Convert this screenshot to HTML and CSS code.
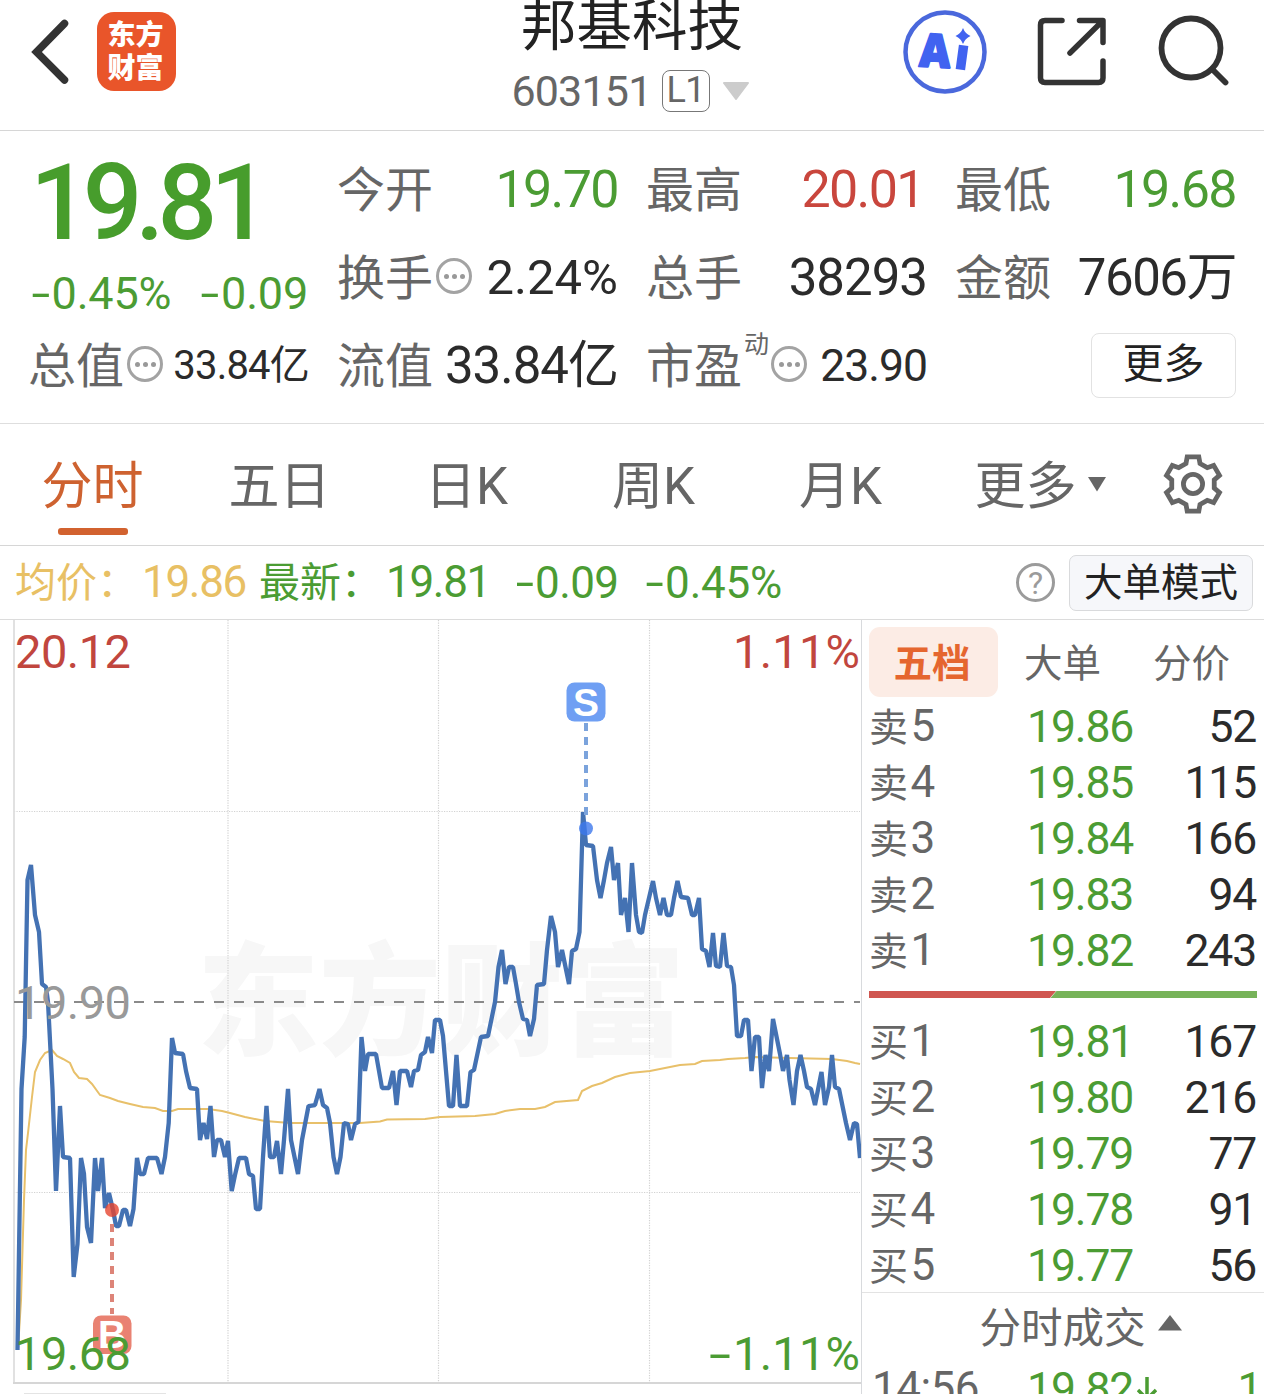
FILE: index.html
```html
<!DOCTYPE html>
<html lang="zh-CN">
<head>
<meta charset="utf-8">
<title>邦基科技 603151</title>
<link rel="stylesheet" href="styles.css">
</head>
<body>
<div class="app">
  <header class="top">
    <div class="top-left">
      <svg class="back" width="40" height="70" viewBox="0 0 40 70"><path d="M34.500 6.500L6.500 35L34.500 63" fill="none" stroke="#333" stroke-width="7.500" stroke-linecap="round" stroke-linejoin="miter"/></svg>
      <div class="logo"><span>东方</span><span>财富</span></div>
    </div>
    <div class="stock">
      <h1 class="stock-name">邦基科技</h1>
      <div class="stock-code"><span>603151</span><b class="level">L1</b>
        <svg width="26" height="18" viewBox="0 0 26 18"><path d="M1 1H25L13 17Z" fill="#ccc" stroke="#ccc" stroke-width="2" stroke-linejoin="round"/></svg>
      </div>
    </div>
    <div class="top-right">
      <svg width="84" height="84" viewBox="903.500 9.500 84 84"><circle cx="945.500" cy="51.500" r="39.500" fill="#fff" stroke="#4a68dc" stroke-width="4.500"/><g class="ai-text"><text x="920" y="66.500" textLength="31" lengthAdjust="spacingAndGlyphs" transform="rotate(3 935 50)">A</text></g><path d="M963.500 49.500L961.500 64.500" stroke="#4163f0" stroke-width="9.500" stroke-linecap="square" stroke-linejoin="round"/><path d="M963.500 27.500Q965.500 33 971 35.500Q965.500 38 963.500 43.500Q961.500 38 956 35.500Q961.500 33 963.500 27.500Z" fill="#4163f0"/></svg>
      <svg width="70" height="70" viewBox="1038 17 70 70" fill="none" stroke="#333" stroke-width="5.500" stroke-linecap="round" stroke-linejoin="round"><path d="M1063 20.500H1046Q1041.500 20.500 1041.500 25V78Q1041.500 82.500 1046 82.500H1099.500Q1104 82.500 1104 78V61M1080.500 20.500H1104V42.500M1071 53L1103 21.500"/></svg>
      <svg width="72" height="72" viewBox="1159 14 72 72" fill="none" stroke="#333" stroke-width="5.800" stroke-linecap="round"><circle cx="1192" cy="48" r="29.500"/><path d="M1213 69L1226.500 82.500"/></svg>
    </div>
  </header>

  <section class="quote">
    <div class="main-price down">
      <div class="price">19.81</div>
      <div class="change"><span><i class="neg">-</i>0.45%</span><span><i class="neg">-</i>0.09</span></div>
    </div>
    <div class="cell"><span class="label">今开</span><span class="v52 down">19.70</span></div>
    <div class="cell"><span class="label">最高</span><span class="v52 up gap-r">20.01</span></div>
    <div class="cell"><span class="label">最低</span><span class="v52 down">19.68</span></div>
    <div class="cell"><span class="label">换手<i class="dots"><u></u><u></u><u></u></i></span><span class="v49">2.24%</span></div>
    <div class="cell"><span class="label">总手</span><span class="v50">38293</span></div>
    <div class="cell"><span class="label">金额</span><span class="v50 yuan">7606万</span></div>
    <div class="cell"><span class="label">总值<i class="dots"><u></u><u></u><u></u></i></span><span class="v40">33.84亿</span></div>
    <div class="cell"><span class="label">流值</span><span class="v51">33.84亿</span></div>
    <div class="cell"><span class="label">市盈<sup class="dyn">动</sup><i class="dots"><u></u><u></u><u></u></i></span><span class="v44">23.90</span></div>
    <div class="cell end"><button class="more">更多</button></div>
  </section>

  <nav class="tabs">
    <a class="tab active">分时</a><a class="tab">五日</a><a class="tab">日K</a><a class="tab">周K</a><a class="tab">月K</a>
    <a class="tab wide">更多<svg width="20" height="16" viewBox="0 0 20 16"><path d="M1 1H19L10 15.500Z" fill="#666"/></svg></a>
    <a class="gear"><svg width="62" height="62" viewBox="-31 -31 62 62" fill="none" stroke="#666" stroke-width="4.800"><path d="M-5.800 -27.200H5.800L7 -20.500L14.250 -16.300L20.660 -18.600L26.460 -8.580L21.250 -4.190V4.190L26.460 8.580L20.660 18.600L14.250 16.300L7 20.500L5.800 27.200H-5.800L-7 20.500L-14.250 16.300L-20.660 18.600L-26.460 8.580L-21.250 4.190V-4.190L-26.460 -8.580L-20.660 -18.600L-14.250 -16.300L-7 -20.500Z"/><circle r="9.600"/></svg></a>
  </nav>

  <div class="info">
    <span class="avg"><span class="zh">均价：</span>19.86</span>
    <span class="last down"><span class="zh">最新：</span>19.81</span>
    <span class="last-chg down"><i class="neg">-</i>0.09</span>
    <span class="last-pct down"><i class="neg">-</i>0.45%</span>
    <span class="help">?</span>
    <button class="mode">大单模式</button>
  </div>

  <main class="body">
    <svg class="chart" width="861" height="774" viewBox="0 620 861 774">
      <text class="watermark" x="197" y="1045" textLength="488" lengthAdjust="spacingAndGlyphs">东方财富</text>
      <g stroke="#d2d2d2" stroke-width="1.200" stroke-dasharray="1.200 1.300"><path d="M228 620V1383M438.500 620V1383M649.500 620V1383M14 811.500H860M14 1192.500H860"/></g>
      <path d="M14 620V1383" stroke="#dedede" stroke-width="1.800"/>
      <path d="M13 1383H861" stroke="#d6d6d6" stroke-width="2"/>
      <rect x="24" y="1393" width="142" height="4" fill="#e4e4e4"/>
      <path d="M14 1002H860" stroke="#8a8a8a" stroke-width="2" stroke-dasharray="10 10"/>
      <polyline fill="none" stroke="#e8c06a" stroke-width="2" points="18,1349 21,1300 24,1200 26,1150 28,1133 32,1097 35,1072 40,1060 45,1053 52,1050 57,1056 63,1059 70,1063 74,1072 79,1078 87,1079 92,1084 100,1095 110,1098 118,1101 130,1104 143,1107 155,1108 163,1111 172,1111 178,1109 208,1109 222,1111 230,1113 245,1117 265,1121 290,1123 360,1123 380,1121.500 387,1119.500 425,1119 440,1117 475,1116 495,1114 505,1111 520,1109 535,1109 545,1107 555,1102 578,1100 582,1091 592,1086 602,1083 615,1077 630,1073 650,1071 665,1068 680,1065 695,1064 702,1061 720,1060 728,1059 745,1058 755,1057 790,1058 832,1059 847,1061 855,1063 860,1064"/>
      <polyline fill="none" stroke="#4472b3" stroke-width="4.300" stroke-linejoin="bevel" points="17.500,1350 21.500,1089 24.700,1037 27.500,880 31,865 35,915 39,932 42,984 46,987 48,1002 52.500,1089 56,1191 60,1106 63,1157 70,1158 73.700,1277 77.500,1244 81,1158 84,1174 87,1227 91,1243 95,1158 98,1191 102,1158 105,1208 109,1193 113,1210 116,1226 119,1226 123,1210 126,1210 130,1226 133.500,1209 137,1158 140,1174 144,1174 148,1158 157,1158 161.500,1174 165,1157 168.700,1123 172,1038 175,1053 183,1054 186,1071 190,1088 197,1089 200,1140 203.500,1123 207,1139 210.500,1106 214,1157 217,1140 221,1140 225,1157 228,1141 231.700,1191 235,1175 239,1158 246,1158 249,1174 253,1176 256,1209 260,1209 263,1157 266.500,1106 270,1157 274,1157 277,1141 281,1174 284,1140 288,1089 291,1140 298,1174 302,1140 308.500,1106 315,1105 319.500,1089 323,1105 327,1108 330,1123 333.500,1157 337,1174 340.500,1157 344,1123 348,1124 351,1140 355,1124 358.500,1122 361.500,1037 365,1071 368,1054 376,1054 382,1088 389,1088 393,1071 396.500,1105 400,1071 407,1071 411,1087 414,1071 418,1070 421,1055 425,1052 428,1037 432,1053 435,1020 440,1020 443,1036 449,1106 453,1106 456.500,1055 460,1106 467,1106 470.500,1072 474,1070 481,1037 488,1036 495,1002 498.500,967 502,950 505.500,984 509,967 513,967 516,984 519,1002 523,1019 527,1020 530,1036 534,1019 537,985 544,984 547,950 551,916 555,932 558,967 562,950 569,984 572,951 576,949 579.500,932 583,812 586,845 593,846 597,880 600.500,898 604,880 607,863 611,847 614,880 618,863 621,915 625,898 628.500,932 632,863 636,915 639,932 642,933 645,915 653,881 656,898 660,915 663.500,898 667,915 671,915 674,898 677.500,881 681,897 688,898 692,915 695,915 699,898 702,949 706,951 709.500,967 713,933 716,966 720,967 723.500,933 727,966 731,967 734,985 737,1036 741,1036 744,1020 748,1020 751.500,1071 755,1037 759,1037 762,1088 765.500,1055 769,1071 773,1019 780,1054 783,1071 787,1055 789.500,1080 793.500,1105 797,1071 800.500,1055 804,1071 807,1087 811,1089 815,1105 821.500,1072 825,1105 829,1087 832,1055 835,1087 839,1089 846,1123 850,1140 854,1123 857,1124 860,1158"/>
      <path d="M586 723V820" stroke="#7ba3dc" stroke-width="4" stroke-dasharray="8 6"/>
      <circle cx="586" cy="828.500" r="7" fill="#3d78ec" fill-opacity=".8"/>
      <rect x="566.500" y="682.500" width="39" height="39" rx="8" fill="#6f9ff3"/>
      <text class="badge" x="586" y="716" text-anchor="middle">S</text>
      <path d="M112 1224V1314" stroke="#dd8478" stroke-width="4" stroke-dasharray="8 6"/>
      <circle cx="112" cy="1210" r="7" fill="#e6452f" fill-opacity=".8"/>
      <rect x="93" y="1315.500" width="38.500" height="38.500" rx="8" fill="#e98272"/>
      <text class="badge" x="112" y="1348" text-anchor="middle">B</text>
      <text class="axis red" x="15" y="668" textLength="116" lengthAdjust="spacing">20.12</text>
      <text class="axis red" x="733" y="668" textLength="127" lengthAdjust="spacing">1.11%</text>
      <text class="axis gray" x="15" y="1019" textLength="116" lengthAdjust="spacing">19.90</text>
      <text class="axis green" x="15" y="1370" textLength="116" lengthAdjust="spacing">19.68</text>
      <text class="axis green" x="733" y="1370" textLength="127" lengthAdjust="spacing">1.11%</text>
      <text class="axis green" x="709" y="1370" textLength="22" lengthAdjust="spacingAndGlyphs">-</text>
    </svg>

    <aside class="depth">
      <div class="depth-tabs"><a class="on">五档</a><a>大单</a><a>分价</a></div>
      <div class="row"><span>卖<b>5</b></span><span class="down">19.86</span><span>52</span></div>
      <div class="row"><span>卖<b>4</b></span><span class="down">19.85</span><span>115</span></div>
      <div class="row"><span>卖<b>3</b></span><span class="down">19.84</span><span>166</span></div>
      <div class="row"><span>卖<b>2</b></span><span class="down">19.83</span><span>94</span></div>
      <div class="row"><span>卖<b>1</b></span><span class="down">19.82</span><span>243</span></div>
      <svg class="ratio" width="388" height="7" viewBox="0 0 388 7"><path d="M0 0H187L181 7H0Z" fill="#d05650"/><path d="M187.500 0H388V7H181.500Z" fill="#77b359"/></svg>
      <div class="row"><span>买<b>1</b></span><span class="down">19.81</span><span>167</span></div>
      <div class="row"><span>买<b>2</b></span><span class="down">19.80</span><span>216</span></div>
      <div class="row"><span>买<b>3</b></span><span class="down">19.79</span><span>77</span></div>
      <div class="row"><span>买<b>4</b></span><span class="down">19.78</span><span>91</span></div>
      <div class="row"><span>买<b>5</b></span><span class="down">19.77</span><span>56</span></div>
      <div class="deals-title">分时成交<svg width="26" height="18" viewBox="0 0 26 18"><path d="M13 1L25 16.500H1Z" fill="#666"/></svg></div>
      <div class="row deal"><span><b>14:56</b></span><span class="down">19.82<svg width="20" height="26" viewBox="0 0 20 26" fill="none" stroke="#4b9c33" stroke-width="3.500"><path d="M10 0V22M1 13L10 22L19 13"/></svg></span><span class="down">1</span></div>
    </aside>
  </main>
</div>
</body>
</html>
```

FILE: styles.css
```css
* { box-sizing: border-box; }
body { margin: 0; background: #fff; color: #2b2b2b; font-family: Roboto, "Noto Sans CJK SC", sans-serif; }
i, u, b, sup { font-style: normal; text-decoration: none; font-weight: 400; }
button { font-family: inherit; color: #222; padding: 0; }
svg { display: block; flex: none; }
.app { width: 1264px; height: 1394px; overflow: hidden; display: flex; flex-direction: column; }
.down { color: #4b9c33; }
.up { color: #c9463d; }
.neg { display: inline-block; width: .48em; text-align: center; transform: scaleX(1.5); }

.top { height: 131px; border-bottom: 1px solid #d6d6d6; display: grid; grid-template-columns: 400px 460px 404px; }
.top-left { display: flex; align-items: flex-start; padding-left: 30px; }
.back { margin-top: 17px; }
.logo { margin: 12px 0 0 27px; width: 79px; height: 79px; border-radius: 17px; background: #e9552a; color: #fff; padding: 5px 2px 0 0; display: flex; flex-direction: column; align-items: center; font-size: 28px; line-height: 34px; }
.logo span { font-weight: 900; font-family: "Noto Sans CJK SC", sans-serif; margin-top: -1px; height: 34px; }
.stock { display: flex; flex-direction: column; align-items: center; }
.stock-name { margin: 0 0 0 4px; font-size: 55.500px; line-height: 54px; height: 66px; font-weight: 400; color: #222; }
.stock-code { display: flex; align-items: center; height: 50px; font-size: 43px; line-height: 50px; color: #666; letter-spacing: -.8px; }
.level { font-size: 36px; line-height: 39px; height: 42px; width: 48px; text-align: center; border: 1.500px solid #777; border-radius: 8px; margin: 0 13px 0 10px; }
.top-right { display: flex; align-items: flex-start; padding: 9.500px 0 0 43px; }
.top-right svg:nth-child(2) { margin: 7px 51px 0 50px; }
.top-right svg:nth-child(3) { margin-top: 4px; }
.ai-text { font: 900 46px "Open Sans", sans-serif; fill: #4163f0; stroke: #4163f0; stroke-width: 2; stroke-linejoin: round; }

.quote { height: 293px; border-bottom: 1px solid #dedede; padding: 15px 28px 0 30px; display: grid; grid-template-columns: repeat(4, 279px); column-gap: 30px; grid-template-rows: repeat(3, 88px); line-height: 88px; }
.main-price { grid-row: span 2; padding-right: 1px; }
.price { font-size: 105px; font-weight: 500; line-height: 116px; height: 116px; letter-spacing: -7px; color: #479d2c; }
.change { display: flex; justify-content: space-between; font-size: 45px; line-height: 63px; letter-spacing: -.2px; }
.cell { display: flex; justify-content: space-between; white-space: nowrap; }
.cell.end { justify-content: flex-end; align-items: center; }
.label { font-size: 48px; color: #666; display: flex; align-items: center; margin-left: -2px; padding-top: 2px; }
.v52 { font-size: 52px; letter-spacing: -1.600px; }
.gap-r { margin-right: 3px; }
.v49 { font-size: 49px; }
.v50 { font-size: 51px; letter-spacing: -1px; }
.yuan { letter-spacing: -1.500px; }
.v40 { font-size: 40px; letter-spacing: -.8px; }
.v51 { font-size: 51px; letter-spacing: -1px; }
.v44 { font-size: 44.500px; letter-spacing: -1px; }
.dots { width: 36px; height: 36px; border: 3.500px solid #a3a3a3; border-radius: 50%; display: flex; align-items: center; justify-content: center; gap: 3px; margin: -6px 0 0 3px; }
.dots u { width: 5px; height: 5px; border-radius: 50%; background: #999; }
.dyn { font-size: 25px; line-height: 30px; margin: 0 0 44px 2px; }
.dyn + .dots { margin-left: 2px; }
.more { width: 145px; height: 65px; border: 1.500px solid #e2e2e2; border-radius: 8px; background: #fff; font-size: 41px; line-height: 58px; padding-bottom: 3px; margin-top: -1px; }

.tabs { height: 122px; border-bottom: 1px solid #d6d6d6; display: flex; color: #666; font-size: 51px; line-height: 126px; }
.tab { width: 187px; text-align: center; display: flex; justify-content: center; padding-right: 2px; }
.active { color: #ce6230; position: relative; }
.active::after { content: ""; position: absolute; left: 58px; bottom: 10px; width: 70px; height: 7px; border-radius: 3px; background: #d2622f; }
.wide { width: 213px; }
.wide svg { margin: 52px 0 0 10px; }
.gear { width: 90px; padding: 29px 0 0 14px; }

.info { height: 74px; border-bottom: 1px solid #dcdcdc; display: flex; align-items: center; padding-left: 15px; font-size: 44px; line-height: 72px; letter-spacing: -.6px; white-space: nowrap; }
.zh { font-size: 41px; letter-spacing: 0; margin-right: 4px; }
.avg { color: #e8c064; width: 244px; letter-spacing: -1.300px; }
.last { width: 255px; letter-spacing: -1.300px; }
.last-chg { width: 130px; }
.last-pct { width: 372px; letter-spacing: -.2px; }
.help { width: 39px; height: 39px; border: 3px solid #9b9b9b; border-radius: 50%; color: #9b9b9b; font-size: 32px; line-height: 34px; text-align: center; letter-spacing: 0; }
.mode { width: 184px; height: 56px; margin-left: 14px; border: 1.500px solid #d9dadc; border-radius: 7px; background: #f6f7fa; font-size: 38.500px; line-height: 53px; }

.body { display: flex; height: 774px; }
.chart { width: 861px; height: 774px; }
.watermark { font: 900 122px "Noto Sans CJK SC", sans-serif; fill: #f7f7f7; }
.badge { font: 700 39px "Liberation Sans", sans-serif; fill: #fff; }
.axis { font-size: 47px; }
.red { fill: #c1463e; }
.gray { fill: #999; }
.green { fill: #4b9c33; }

.depth { width: 403px; border-left: 1.500px solid #d8dadd; padding-top: 7px; }
.depth-tabs { display: flex; margin: 0 0 2px 7px; height: 70px; font-size: 38.500px; line-height: 74px; color: #666; }
.depth-tabs a { width: 129px; text-align: center; }
.depth-tabs .on { color: #e5662f; background: #fcece5; border-radius: 11px; font-weight: 700; padding-right: 3px; }
.row { display: grid; grid-template-columns: 158px 1fr 110px; height: 56px; line-height: 56px; padding: 0 8px 0 7px; font-size: 44.500px; letter-spacing: -1.100px; }
.row > span:first-child { color: #666; font-size: 39px; line-height: 54px; letter-spacing: -.5px; }
.row b { font-size: 44px; margin-left: 3px; }
.row > span:last-child { text-align: right; letter-spacing: -1.200px; }
.ratio { margin: 12px 0 16px 7px; }
.deals-title { margin-top: -2px; border-top: 1px solid #e3e3e3; height: 69px; line-height: 72px; font-size: 41.500px; color: #666; display: flex; justify-content: center; padding-left: 36px; }
.deals-title svg { margin: 21px 0 0 11px; }
.deal > span { display: flex; }
.deal > span:last-child { justify-content: flex-end; padding-right: 6px; }
.deal svg { margin: 16px 0 0 4px; }
```
